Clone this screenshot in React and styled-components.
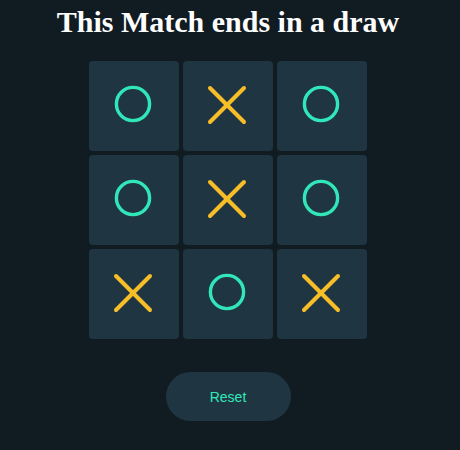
import React, { useState } from "react";
import styled, { createGlobalStyle } from "styled-components";

const GlobalStyle = createGlobalStyle`
  html, body {
    margin: 0;
    padding: 0;
    background: #111b22;
  }
  body {
    font-family: "Liberation Serif", serif;
  }
`;

const Page = styled.div`
  width: 460px;
  min-height: 450px;
  display: flex;
  flex-direction: column;
  align-items: center;
  padding-top: 4px;
  padding-right: 4px;
  box-sizing: border-box;
`;

const Title = styled.h1`
  margin: 0 0 22px;
  font-family: "Liberation Serif", serif;
  font-size: 30px;
  font-weight: 700;
  line-height: 35px;
  color: #ffffff;
`;

const Board = styled.div`
  display: grid;
  grid-template-columns: repeat(3, 90px);
  grid-auto-rows: 90px;
  gap: 4px;
`;

const Cell = styled.button`
  display: flex;
  align-items: center;
  justify-content: center;
  border: none;
  padding: 0;
  border-radius: 4px;
  background: #1f3541;
  cursor: pointer;
`;

const ResetButton = styled.button`
  margin-top: 33px;
  width: 125px;
  height: 49px;
  border: none;
  border-radius: 25px;
  background: #1f3541;
  color: #31e8bb;
  font-family: "Liberation Sans", Arial, sans-serif;
  font-size: 14px;
  cursor: pointer;
`;

const Circle = () => (
  <svg width="40" height="40" viewBox="0 0 40 40" style={{ marginTop: -4, marginLeft: -2 }}>
    <circle cx="20" cy="20" r="16.6" fill="none" stroke="#31e6b9" strokeWidth="3.4" />
  </svg>
);

const Cross = () => (
  <svg width="42" height="42" viewBox="0 0 42 42" style={{ marginTop: -2, marginLeft: -3 }}>
    <g stroke="#f8be28" strokeWidth="4" strokeLinecap="round">
      <line x1="4" y1="4" x2="38" y2="38" />
      <line x1="38" y1="4" x2="4" y2="38" />
    </g>
  </svg>
);

const initial = ["O", "X", "O", "O", "X", "O", "X", "O", "X"];

const App = () => {
  const [cells, setCells] = useState(initial);

  return (
    <Page>
      <GlobalStyle />
      <Title>This Match ends in a draw</Title>
      <Board>
        {cells.map((value, i) => (
          <Cell key={i}>
            {value === "O" && <Circle />}
            {value === "X" && <Cross />}
          </Cell>
        ))}
      </Board>
      <ResetButton onClick={() => setCells(Array(9).fill(null))}>Reset</ResetButton>
    </Page>
  );
};

export default App;
